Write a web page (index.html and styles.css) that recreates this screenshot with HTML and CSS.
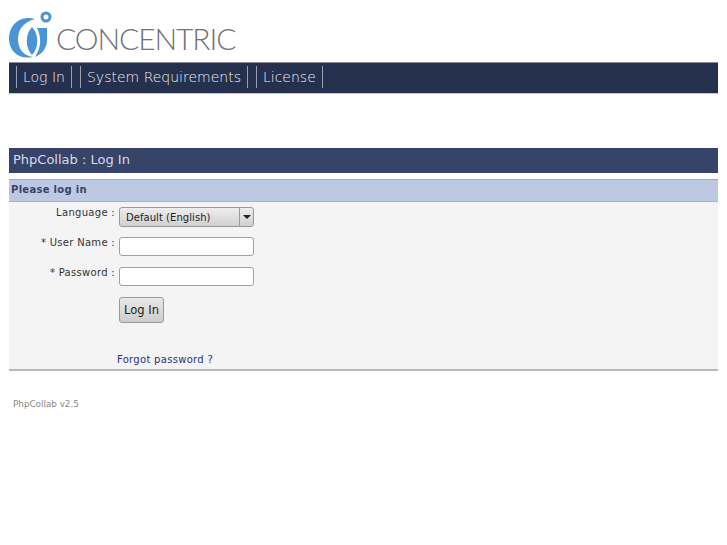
FILE: index.html
```html
<!DOCTYPE html>
<html lang="en">
<head>
  <meta charset="UTF-8">
  <title>PhpCollab : Log In</title>
  <link rel="stylesheet" href="styles.css">
</head>
<body>
<div class="logo">
  <svg class="logo-mark" width="46" height="48" viewBox="0 0 46 48">
    <path d="M26 9C12 5 0 14 0 29C0 41 10 50 24 47C14 46 9 38 9 29C9 19 15 12 26 9Z" fill="#4a95d6"/>
    <path d="M23 17C16 24 16 38 23 45C30 38 30 24 23 17Z" fill="#4a95d6"/>
    <path d="M28 18H38V30C38 38 33 44 26 47C32 38 33 28 28 18Z" fill="#4a95d6"/>
    <circle cx="37" cy="7" r="4" fill="none" stroke="#4a95d6" stroke-width="3"/>
  </svg>
  <span class="logo-text">CONCENTRIC</span>
</div>
<nav class="nav">
  <a href="#">Log In</a>
  <a href="#">System Requirements</a>
  <a href="#">License</a>
</nav>
<h1 class="title">PhpCollab : Log In</h1>
<form class="panel">
  <h2 class="panel-head">Please log in</h2>
  <div class="fields">
    <label class="lbl">Language :</label>
    <div class="select">
      <span class="select-value">Default (English)</span>
      <span class="select-arrow"></span>
    </div>
    <label class="lbl">* User Name :</label>
    <input class="input" type="text">
    <label class="lbl">* Password :</label>
    <input class="input" type="password">
    <span></span>
    <button class="btn" type="button">Log In</button>
  </div>
  <a class="forgot" href="#">Forgot password ?</a>
</form>
<p class="footer">PhpCollab v2.5</p>
</body>
</html>
```

FILE: styles.css
```css
body {
  margin: 0;
  padding: 0 9px;
  background: #fff;
  font-family: "DejaVu Sans", sans-serif;
  font-size: 10px;
  color: #333;
}
.logo {
  display: flex;
  align-items: flex-end;
  height: 62px;
  box-sizing: border-box;
  padding-bottom: 4px;
}
.logo-mark {
  flex: none;
}
.logo-text {
  margin-left: 1px;
  margin-bottom: 3px;
  font-family: "Lato", sans-serif;
  font-weight: 300;
  font-size: 30px;
  line-height: 34px;
  letter-spacing: -1.1px;
  color: #707273;
}
.nav {
  display: flex;
  align-items: center;
  gap: 8px;
  height: 32px;
  padding-left: 7px;
  padding-bottom: 2px;
  background: #252f4e;
  border-top: 1px solid #8a8f9e;
  border-bottom: 1px solid #c4c7cf;
  box-sizing: border-box;
}
.nav a {
  padding: 0 6px;
  border-left: 1px solid #9aa0b2;
  border-right: 1px solid #9aa0b2;
  font-size: 14px;
  font-weight: 300;
  line-height: 22px;
  color: #f0f1f5;
  text-decoration: none;
}
.title {
  margin: 54px 0 0;
  height: 25px;
  padding-left: 4px;
  background: #36446a;
  font-size: 13px;
  font-weight: normal;
  line-height: 24px;
  color: #d8dbe5;
}
.panel {
  display: block;
  margin-top: 6px;
  height: 192px;
  background: #f4f4f4;
  border-bottom: 2px solid #b9b9b9;
  box-sizing: border-box;
}
.panel-head {
  margin: 0;
  height: 23px;
  padding-left: 2px;
  background: #bcc8e4;
  border-top: 1px solid #a8a8b0;
  border-bottom: 1px solid #a8b0c4;
  box-sizing: border-box;
  font-size: 10px;
  font-weight: bold;
  line-height: 20px;
  letter-spacing: 0.3px;
  color: #36446a;
}
.fields {
  display: grid;
  grid-template-columns: 106px 136px;
  grid-template-rows: 20px 20px 20px 26px;
  row-gap: 10px;
  column-gap: 4px;
  padding-top: 5px;
}
.lbl {
  text-align: right;
  line-height: 12px;
  letter-spacing: 0.3px;
  color: #333;
}
.select {
  display: flex;
  width: 135px;
  height: 20px;
  box-sizing: border-box;
  border: 1px solid #9a9a9a;
  border-radius: 3px;
  background: linear-gradient(#eeeeee, #d0d0d0);
}
.select-value {
  flex: 1;
  padding-left: 6px;
  line-height: 19px;
  letter-spacing: 0.05px;
  color: #222;
}
.select-arrow {
  position: relative;
  width: 13px;
  border-left: 1px solid #9a9a9a;
}
.select-arrow::after {
  content: "";
  position: absolute;
  top: 7px;
  left: 3px;
  border-left: 4px solid transparent;
  border-right: 4px solid transparent;
  border-top: 4px solid #222;
}
.input {
  width: 135px;
  height: 19px;
  margin: 0;
  padding: 0;
  box-sizing: border-box;
  background: #fff;
  border: 1px solid #a0a0a0;
  border-radius: 3px;
}
.btn {
  width: 45px;
  height: 26px;
  margin: 0;
  padding: 0;
  border: 1px solid #9a9a9a;
  border-radius: 3px;
  background: linear-gradient(#e8e8e8, #cccccc);
  font-family: "DejaVu Sans", sans-serif;
  font-size: 11.500px;
  color: #222;
}
.forgot {
  display: block;
  margin: 30px 0 0 108px;
  line-height: 13px;
  letter-spacing: 0.3px;
  color: #2b3183;
  text-decoration: none;
}
.footer {
  margin: 27px 0 0 4px;
  font-size: 8.800px;
  line-height: 12px;
  color: #888;
}
```
